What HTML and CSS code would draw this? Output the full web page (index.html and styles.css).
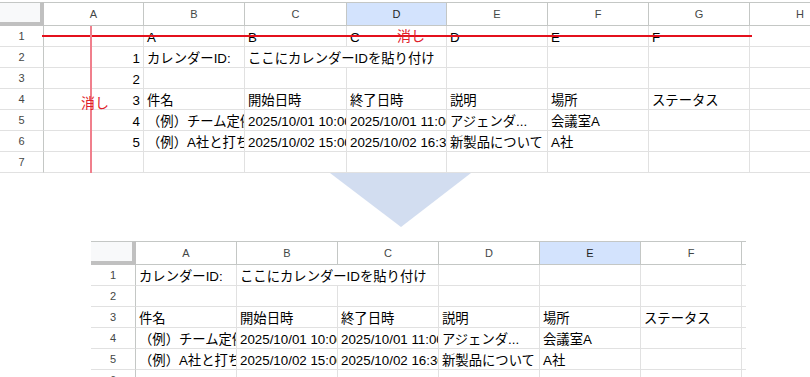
FILE: index.html
```html
<!DOCTYPE html>
<html lang="ja">
<head>
<meta charset="utf-8">
<title>カレンダー連携シート</title>
<link rel="stylesheet" href="styles.css">
</head>
<body>
  <!-- Before: sheet with the helper row 1 and helper column A marked for removal -->
  <div class="stage">
    <div class="sheet top">
      <div class="corner"></div>
      <div class="ch">A</div><div class="ch">B</div><div class="ch">C</div><div class="ch sel">D</div><div class="ch">E</div><div class="ch">F</div><div class="ch">G</div><div class="ch">H</div>

      <div class="rh">1</div>
      <div class="c"></div><div class="c">A</div><div class="c">B</div><div class="c">C</div><div class="c">D</div><div class="c">E</div><div class="c">F</div><div class="c"></div>

      <div class="rh">2</div>
      <div class="c num">1</div><div class="c">カレンダーID:</div><div class="c span2">ここにカレンダーIDを貼り付け</div><div class="c"></div><div class="c"></div><div class="c"></div><div class="c"></div>

      <div class="rh">3</div>
      <div class="c num">2</div><div class="c"></div><div class="c"></div><div class="c"></div><div class="c"></div><div class="c"></div><div class="c"></div><div class="c"></div>

      <div class="rh">4</div>
      <div class="c num">3</div><div class="c">件名</div><div class="c">開始日時</div><div class="c">終了日時</div><div class="c">説明</div><div class="c">場所</div><div class="c">ステータス</div><div class="c"></div>

      <div class="rh">5</div>
      <div class="c num">4</div><div class="c">（例）チーム定例</div><div class="c">2025/10/01 10:00</div><div class="c">2025/10/01 11:00</div><div class="c">アジェンダ...</div><div class="c">会議室A</div><div class="c"></div><div class="c"></div>

      <div class="rh">6</div>
      <div class="c num">5</div><div class="c">（例）A社と打ち合わせ</div><div class="c">2025/10/02 15:00</div><div class="c">2025/10/02 16:30</div><div class="c">新製品について</div><div class="c">A社</div><div class="c"></div><div class="c"></div>

      <div class="rh">7</div>
      <div class="c"></div><div class="c"></div><div class="c"></div><div class="c"></div><div class="c"></div><div class="c"></div><div class="c"></div><div class="c"></div>
    </div>

    <!-- strike marks drawn over the grid -->
    <div class="strike-h"></div>
    <div class="strike-v"></div>
    <span class="mark mark-row">消し</span>
    <span class="mark mark-col">消し</span>
  </div>

  <div class="arrow">
    <svg width="141" height="54" viewBox="0 0 141 54"><polygon points="0,0 141,0 71,54" fill="#d2ddf0"/></svg>
  </div>

  <!-- After: cleaned sheet -->
  <div class="sheet bottom">
    <div class="corner"></div>
    <div class="ch">A</div><div class="ch">B</div><div class="ch">C</div><div class="ch">D</div><div class="ch sel">E</div><div class="ch">F</div><div class="ch stub"></div>

    <div class="rh">1</div>
    <div class="c">カレンダーID:</div><div class="c span2">ここにカレンダーIDを貼り付け</div><div class="c"></div><div class="c"></div><div class="c"></div><div class="c stub"></div>

    <div class="rh">2</div>
    <div class="c"></div><div class="c"></div><div class="c"></div><div class="c"></div><div class="c"></div><div class="c"></div><div class="c stub"></div>

    <div class="rh">3</div>
    <div class="c">件名</div><div class="c">開始日時</div><div class="c">終了日時</div><div class="c">説明</div><div class="c">場所</div><div class="c">ステータス</div><div class="c stub"></div>

    <div class="rh">4</div>
    <div class="c">（例）チーム定例</div><div class="c">2025/10/01 10:00</div><div class="c">2025/10/01 11:00</div><div class="c">アジェンダ...</div><div class="c">会議室A</div><div class="c"></div><div class="c stub"></div>

    <div class="rh">5</div>
    <div class="c">（例）A社と打ち合わせ</div><div class="c">2025/10/02 15:00</div><div class="c">2025/10/02 16:30</div><div class="c">新製品について</div><div class="c">A社</div><div class="c"></div><div class="c stub"></div>

    <div class="rh">6</div>
    <div class="c"></div><div class="c"></div><div class="c"></div><div class="c"></div><div class="c"></div><div class="c"></div><div class="c stub"></div>
  </div>
</body>
</html>
```
FILE: styles.css
```css
html, body {
  margin: 0;
  padding: 0;
  overflow: hidden;
  background: #fff;
}

body {
  font-family: "Liberation Sans", "Noto Sans CJK JP", sans-serif;
  color: #000;
}

.stage {
  position: relative;
  margin-top: 2px;
  width: max-content;
}

/* spreadsheet grid */
.sheet {
  display: grid;
  grid-template-rows: 24px;
  grid-auto-rows: 21px;
  width: max-content;
}

.top {
  grid-template-columns: 44px 100px 101px 102px 100px 101px 101px 101px 101px;
}

.bottom {
  grid-template-columns: 45px repeat(6, 101px) 4px;
  margin-left: 91px;
}

.sheet > div {
  box-sizing: border-box;
  min-width: 0;
}

.corner {
  background: #f8f9fa;
  border-top: 1px solid #c4c7c5;
  border-right: 4px solid #c0c0c0;
  border-bottom: 4px solid #c0c0c0;
}

.ch {
  border-top: 1px solid #c4c7c5;
  border-right: 1px solid #c4c7c5;
  border-bottom: 1px solid #c4c7c5;
  display: flex;
  align-items: center;
  justify-content: center;
  font-size: 11px;
  color: #444746;
}

.ch.sel {
  background: #d3e3fd;
  color: #1f1f1f;
}

.ch.stub {
  border-right: none;
}

.rh {
  border-right: 1px solid #c4c7c5;
  border-bottom: 1px solid #e1e1e1;
  display: flex;
  align-items: center;
  justify-content: center;
  font-size: 11px;
  color: #444746;
}

.c {
  border-right: 1px solid #e1e1e1;
  border-bottom: 1px solid #e1e1e1;
  padding: 3px 3px 0;
  font-size: 13.33px;
  line-height: 17px;
  white-space: nowrap;
  overflow: hidden;
}

.c.num {
  text-align: right;
}

.c.span2 {
  grid-column: span 2;
}

.c.stub {
  border-right: none;
  padding: 0;
}

/* red removal marks */
.strike-h {
  position: absolute;
  left: 42px;
  top: 33px;
  width: 710px;
  height: 2px;
  background: #e4101c;
}

.strike-v {
  position: absolute;
  left: 90px;
  top: 24px;
  width: 2px;
  height: 147px;
  background: #f07f8c;
}

.mark {
  position: absolute;
  font-family: "Noto Sans CJK JP", sans-serif;
  font-size: 14px;
  line-height: 16px;
  color: #e0202b;
}

.mark-row {
  left: 397px;
  top: 25px;
}

.mark-col {
  left: 81px;
  top: 92px;
}

/* arrow between the two sheets */
.arrow {
  height: 68px;
  padding-left: 330px;
}

.arrow svg {
  display: block;
}
```
